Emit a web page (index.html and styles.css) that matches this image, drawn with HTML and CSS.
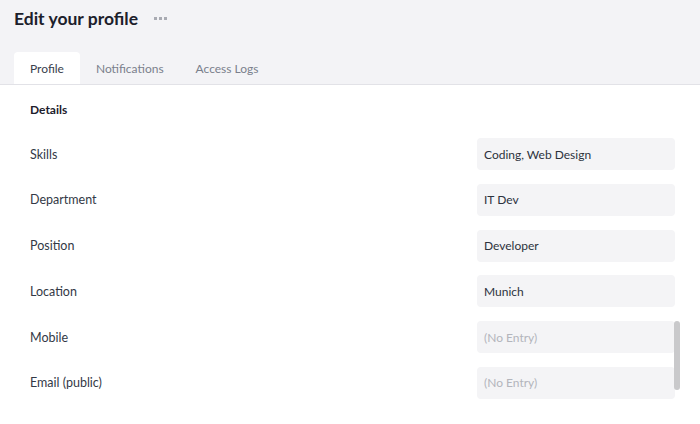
FILE: index.html
```html
<!DOCTYPE html>
<html lang="en">
<head>
<meta charset="utf-8">
<title>Edit your profile</title>
<link rel="stylesheet" href="styles.css">
</head>
<body>
<div class="page">
  <header class="header">
    <div class="title-row">
      <h1 class="title">Edit your profile</h1>
      <span class="more"><i></i><i></i><i></i></span>
    </div>
    <nav class="tabs">
      <span class="tab active">Profile</span>
      <span class="tab">Notifications</span>
      <span class="tab">Access Logs</span>
    </nav>
  </header>
  <main class="content">
    <h2 class="section">Details</h2>
    <div class="rows">
      <div class="row"><span class="label">Skills</span><span class="field">Coding, Web Design</span></div>
      <div class="row"><span class="label">Department</span><span class="field">IT Dev</span></div>
      <div class="row"><span class="label">Position</span><span class="field">Developer</span></div>
      <div class="row"><span class="label">Location</span><span class="field">Munich</span></div>
      <div class="row"><span class="label">Mobile</span><span class="field empty">(No Entry)</span></div>
      <div class="row"><span class="label">Email (public)</span><span class="field empty">(No Entry)</span></div>
    </div>
    <div class="scroll-thumb"></div>
  </main>
</div>
</body>
</html>
```
FILE: styles.css
```css
html, body {
  margin: 0;
  padding: 0;
  background: #ffffff;
}
body {
  font-family: "Lato", "Open Sans", sans-serif;
  color: #2c323d;
  width: 700px;
  height: 424px;
  overflow: hidden;
}
.page {
  display: flex;
  flex-direction: column;
  height: 424px;
}
.header {
  background: #f3f3f6;
  padding: 0 14px;
  border-bottom: 1px solid #e2e2e7;
}
.title-row {
  display: flex;
  align-items: center;
  height: 36px;
  gap: 16px;
}
.title {
  margin: 0;
  font-size: 17.5px;
  font-weight: 700;
  color: #1c202b;
}
.more {
  display: flex;
  gap: 2px;
  margin-top: 1px;
}
.more i {
  width: 3px;
  height: 3px;
  background: #a9abb3;
  display: block;
}
.tabs {
  display: flex;
  margin-top: 16px;
  height: 32px;
  align-items: stretch;
}
.tab {
  display: flex;
  align-items: center;
  padding: 0 16px;
  font-size: 12px;
  color: #7a7f8c;
  border-radius: 4px 4px 0 0;
}
.tab.active {
  background: #ffffff;
  color: #3a404c;
}
.content {
  position: relative;
  flex: 1;
  padding: 16px 25px 0 30px;
}
.section {
  margin: 0;
  font-size: 12px;
  font-weight: 700;
  line-height: 18px;
  color: #1c202b;
}
.rows {
  display: flex;
  flex-direction: column;
  gap: 13.8px;
  margin-top: 19px;
}
.row {
  display: flex;
  align-items: center;
  justify-content: space-between;
  height: 32px;
}
.label {
  font-size: 12.5px;
  color: #333946;
}
.field {
  box-sizing: border-box;
  width: 198px;
  height: 32px;
  background: #f4f4f6;
  border-radius: 4px;
  padding: 0 7px;
  display: flex;
  align-items: center;
  font-size: 12px;
  color: #2c323d;
}
.field.empty {
  color: #b3b5bc;
}
.scroll-thumb {
  position: absolute;
  right: 20px;
  top: 236px;
  width: 6px;
  height: 69px;
  background: #c9c9cb;
  border-radius: 3px;
}
```
